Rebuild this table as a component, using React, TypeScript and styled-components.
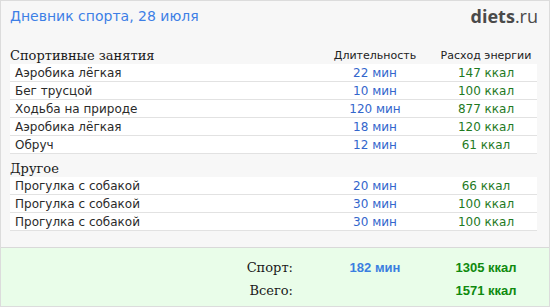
import React from 'react';
import styled, { createGlobalStyle } from 'styled-components';

const Global = createGlobalStyle`
  html, body { margin: 0; padding: 0; background: #f7f7f7; }
  * { box-sizing: border-box; }
`;

const cols = '1fr 120px 102px';

const Frame = styled.div`
  width: 550px;
  height: 307px;
  border: 1px solid #dcdcdc;
  background: #f7f7f7;
  display: flex;
  flex-direction: column;
`;

const Header = styled.div`
  height: 30px;
  display: flex;
  align-items: center;
  justify-content: space-between;
  padding: 0 11px 0 9px;
`;

const Title = styled.div`
  font-family: "DejaVu Sans", Verdana, sans-serif;
  font-size: 14px;
  color: #3d7fe6;
`;

const Logo = styled.div`
  font-family: "Open Sans", "Liberation Sans", sans-serif;
  font-size: 18px;
  color: #4a4a4a;
  b { font-weight: 700; }
`;

const Content = styled.div`
  flex: 1;
  padding: 16px 12px 0 9px;
`;

const Section = styled.div<{ gap?: number }>`
  margin-top: ${p => p.gap || 0}px;
`;

const HeadRow = styled.div`
  display: grid;
  grid-template-columns: ${cols};
  align-items: center;
  height: 17px;
`;

const SectionTitle = styled.div`
  font-family: "DejaVu Serif", serif;
  font-size: 13px;
  color: #1a1a1a;
`;

const ColTitle = styled.div`
  font-family: "DejaVu Sans", Verdana, sans-serif;
  font-size: 11px;
  color: #222;
  text-align: center;
`;

const Row = styled.div`
  display: grid;
  grid-template-columns: ${cols};
  align-items: center;
  height: 18px;
  background: #fff;
  border-bottom: 1px solid #e2e2e2;
  font-family: "DejaVu Sans", Verdana, sans-serif;
  font-size: 12px;
`;

const Name = styled.div`
  padding-left: 5px;
  color: #2a2a2a;
`;

const Cell = styled.div<{ tone: 'blue' | 'green' }>`
  text-align: center;
  color: ${p => (p.tone === 'blue' ? '#3366cc' : '#1f7a1f')};
`;

const Footer = styled.div`
  height: 59px;
  background: #e9fde9;
  border-top: 1px solid #d9d9d9;
  padding: 8px 12px 0 9px;
`;

const TotalRow = styled.div`
  display: grid;
  grid-template-columns: ${cols};
  align-items: center;
  height: 23px;
`;

const TotalLabel = styled.div`
  font-family: "DejaVu Serif", serif;
  font-size: 13px;
  color: #1a1a1a;
  text-align: right;
  padding-right: 22px;
`;

const TotalValue = styled.div<{ tone: 'blue' | 'green' }>`
  font-family: "Liberation Sans", Arial, sans-serif;
  font-weight: 700;
  font-size: 13px;
  text-align: center;
  color: ${p => (p.tone === 'blue' ? '#3a7ee0' : '#0f8a0f')};
`;

const sport = [
  ['Аэробика лёгкая', '22 мин', '147 ккал'],
  ['Бег трусцой', '10 мин', '100 ккал'],
  ['Ходьба на природе', '120 мин', '877 ккал'],
  ['Аэробика лёгкая', '18 мин', '120 ккал'],
  ['Обруч', '12 мин', '61 ккал'],
];

const other = [
  ['Прогулка с собакой', '20 мин', '66 ккал'],
  ['Прогулка с собакой', '30 мин', '100 ккал'],
  ['Прогулка с собакой', '30 мин', '100 ккал'],
];

const Rows = ({ items }: { items: string[][] }) => (
  <>
    {items.map((r, i) => (
      <Row key={i}>
        <Name>{r[0]}</Name>
        <Cell tone="blue">{r[1]}</Cell>
        <Cell tone="green">{r[2]}</Cell>
      </Row>
    ))}
  </>
);

export default function App() {
  return (
    <>
      <Global />
      <Frame>
        <Header>
          <Title>Дневник спорта, 28 июля</Title>
          <Logo><b>diets</b>.ru</Logo>
        </Header>
        <Content>
          <Section>
            <HeadRow>
              <SectionTitle>Спортивные занятия</SectionTitle>
              <ColTitle>Длительность</ColTitle>
              <ColTitle>Расход энергии</ColTitle>
            </HeadRow>
            <Rows items={sport} />
          </Section>
          <Section gap={6}>
            <HeadRow>
              <SectionTitle>Другое</SectionTitle>
            </HeadRow>
            <Rows items={other} />
          </Section>
        </Content>
        <Footer>
          <TotalRow>
            <TotalLabel>Спорт:</TotalLabel>
            <TotalValue tone="blue">182 мин</TotalValue>
            <TotalValue tone="green">1305 ккал</TotalValue>
          </TotalRow>
          <TotalRow>
            <TotalLabel>Всего:</TotalLabel>
            <div />
            <TotalValue tone="green">1571 ккал</TotalValue>
          </TotalRow>
        </Footer>
      </Frame>
    </>
  );
}
